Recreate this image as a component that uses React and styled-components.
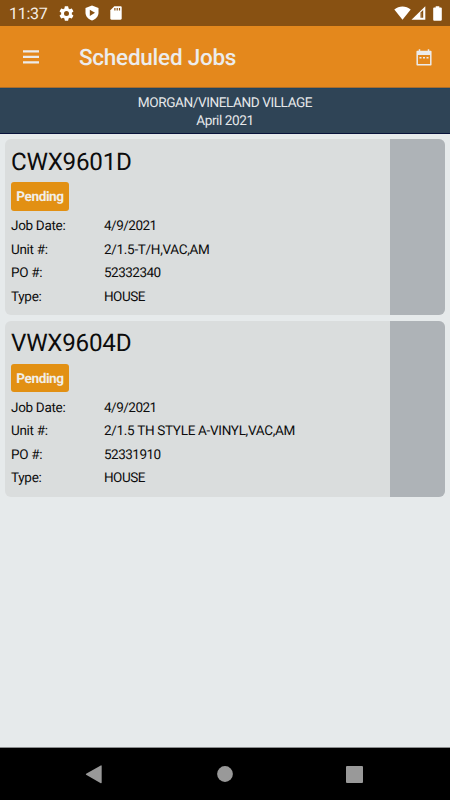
import React from "react";
import styled, { createGlobalStyle } from "styled-components";

const GlobalStyle = createGlobalStyle`
  * { box-sizing: border-box; }
  html, body { margin: 0; padding: 0; }
  body {
    font-family: Roboto, "Liberation Sans", sans-serif;
    text-rendering: geometricPrecision;
    background: #e6eaeb;
    overflow: hidden;
  }
  svg { display: block; flex: none; }
`;

const Screen = styled.div`
  width: 450px;
  height: 800px;
  display: flex;
  flex-direction: column;
  background: #e6eaeb;
  color: #0c0c0c;
`;

const StatusBar = styled.header`
  height: 26px;
  flex: none;
  display: flex;
  justify-content: space-between;
  padding: 0 8px 0 9px;
  background: #885112;
  color: #fff;
`;

const StatusGroup = styled.div`
  display: flex;
  align-items: center;
  gap: ${(p) => p.$gap}px;
`;

const Clock = styled.time`
  width: 39px;
  font-size: 16px;
  letter-spacing: -0.3px;
  line-height: 26px;
  padding-top: 2px;
  color: #f6eee6;
  white-space: nowrap;
`;

const AppBar = styled.div`
  height: 62px;
  flex: none;
  display: flex;
  align-items: center;
  padding: 1px 18px 0 22px;
  background: #e4881c;
  color: #ececec;
  border-bottom: 1px solid #a96c2c;
`;

const Title = styled.h1`
  flex: 1;
  margin: 2px 0 0 39px;
  font-size: 22.5px;
  font-weight: 500;
  line-height: 30px;
  letter-spacing: -0.25px;
`;

const IconButton = styled.button`
  display: flex;
  padding: 0;
  border: 0;
  background: none;
  color: inherit;
`;

const Location = styled.div`
  height: 46px;
  flex: none;
  padding-top: 5px;
  background: #2f4456;
  border-top: 1px solid #1f4562;
  border-bottom: 1px solid #07123a;
  color: #e6e8ea;
  text-align: center;
  font-size: 13.6px;
  letter-spacing: -0.42px;
  line-height: 18px;
`;

const Jobs = styled.main`
  flex: 1;
  display: flex;
  flex-direction: column;
  gap: 5.4px;
  padding: 5.4px 5.4px 0;
`;

const Card = styled.article`
  height: 176px;
  display: flex;
  border-radius: 6px;
  overflow: hidden;
  background: #dadddd;
`;

const CardBody = styled.div`
  flex: 1;
  padding: 8.6px 0 0 5.6px;
`;

const CardAction = styled.div`
  width: 54.6px;
  background: #aeb3b7;
`;

const JobNumber = styled.h2`
  margin: 0 0 5.5px;
  font-size: 24.2px;
  font-weight: 400;
  line-height: 29px;
  letter-spacing: -0.25px;
`;

const Badge = styled.span`
  display: block;
  width: 58px;
  height: 28.5px;
  border-radius: 3px;
  background: #e29013;
  color: #f1eee8;
  font-size: 13.6px;
  font-weight: 700;
  line-height: 30px;
  letter-spacing: -0.4px;
  text-align: center;
`;

const Details = styled.dl`
  display: grid;
  grid-template-columns: 93px 1fr;
  grid-auto-rows: 23.4px;
  margin: 4.4px 0 0;
  font-size: 13.5px;
  letter-spacing: -0.3px;
  line-height: 23.4px;
`;

const Term = styled.dt``;
const Value = styled.dd`
  margin: 0;
  white-space: nowrap;
  letter-spacing: ${(p) => (p.$numeric ? "-0.5px" : "-0.3px")};
`;

const NavBar = styled.nav`
  height: 53px;
  flex: none;
  display: flex;
  justify-content: space-between;
  align-items: center;
  padding: 0 87px 0 85px;
  border-top: 1px solid #8b8d8e;
  background: #000;
  color: #999;
`;

const SettingsIcon = () => (
  <svg width="15" height="15" viewBox="1.500 1.500 21 21" fill="currentColor">
    <path d="M19.43 12.98c.04-.32.07-.64.07-.98s-.03-.66-.07-.98l2.11-1.65c.19-.15.24-.42.12-.64l-2-3.46c-.12-.22-.39-.3-.61-.22l-2.49 1c-.52-.4-1.08-.73-1.69-.98l-.38-2.65A.49.49 0 0 0 14 2h-4c-.25 0-.46.18-.49.42l-.38 2.65c-.61.25-1.17.59-1.69.98l-2.49-1c-.23-.09-.49 0-.61.22l-2 3.46c-.13.22-.07.49.12.64l2.11 1.65c-.04.32-.07.65-.07.98s.03.66.07.98l-2.11 1.65c-.19.15-.24.42-.12.64l2 3.46c.12.22.39.3.61.22l2.49-1c.52.4 1.08.73 1.69.98l.38 2.65c.03.24.24.42.49.42h4c.25 0 .46-.18.49-.42l.38-2.65c.61-.25 1.17-.59 1.69-.98l2.49 1c.23.09.49 0 .61-.22l2-3.46c.12-.22.07-.49-.12-.64l-2.11-1.65ZM12 15.5A3.5 3.5 0 1 1 12 8.500a3.5 3.5 0 0 1 0 7Z" />
  </svg>
);

const ShieldIcon = () => (
  <svg width="14" height="16" viewBox="0 0 14 16">
    <path d="M7 .5 13.5 3v4.7c0 3.6-2.8 6.6-6.5 7.8C3.300 14.300.5 11.300.5 7.700V3Z" fill="currentColor" />
    <path d="m4.800 4.700 5.200 3.100-5.200 3.200Z" fill="#885112" />
  </svg>
);

const SdCardIcon = () => (
  <svg width="12" height="14" viewBox="0 0 12 14">
    <path d="M4.300.2h6.200c.7 0 1.200.5 1.200 1.200v11.200c0 .7-.5 1.200-1.200 1.200h-9C.8 13.800.3 13.300.3 12.600V4.200Z" fill="currentColor" />
    <path d="M4.300 2h1.200v2.600H4.300ZM6.600 2h1.200v2.600H6.600ZM8.900 2h1.200v2.600H8.900Z" fill="#885112" />
  </svg>
);

const WifiIcon = () => (
  <svg width="17" height="14" viewBox="0 0 17 14" fill="currentColor">
    <path d="M.3 3.500C5-.4 12-.4 16.700 3.500L8.500 13.700Z" />
  </svg>
);

const SignalIcon = () => (
  <svg width="15" height="14" viewBox="0 0 15 14">
    <path d="M.5 13.700 14.300.2v13.500Z" fill="currentColor" />
    <path d="M9.500 6.500 12.200 3.900v7.800H9.500Z" fill="#885112" />
    <path d="M10.300 6.800h.8v4.900h-.8Z" fill="#fff" opacity=".25" />
  </svg>
);

const BatteryIcon = () => (
  <svg width="9" height="15" viewBox="0 0 9 15" fill="currentColor">
    <path d="M2.700.3h3.600v1.200h1.600c.5 0 .9.4.9.8v11.500c0 .5-.4.900-.9.900H1.100c-.5 0-.9-.4-.9-.9V2.300c0-.4.4-.8.9-.8h1.600Z" />
  </svg>
);

const MenuIcon = () => (
  <svg width="18" height="14" viewBox="0 0 18 14" fill="currentColor">
    <path d="M1 .3h16v2.300H1ZM1 5.800h16v2.300H1ZM1 11.300h16v2.300H1Z" />
  </svg>
);

const CalendarIcon = () => (
  <svg width="16" height="17" viewBox="0 0 16 17" fill="none" stroke="currentColor">
    <path d="M1.200 2.500h13.600v13.200H1.200Z" strokeWidth="1.500" strokeLinejoin="round" />
    <path d="M1 2h14v4H1Z" fill="currentColor" stroke="none" />
    <path d="M3.500.3V3M12.500.3V3" strokeWidth="1.500" />
    <path d="M3.500 8.800h2M7 8.800h2M10.500 8.800h2" strokeWidth="1.500" />
  </svg>
);

const BackIcon = () => (
  <svg width="18" height="19" viewBox="0 0 18 19" fill="currentColor">
    <path d="M1.100 8.800 15.800.4c.4-.2.9 0 .9.600v16.600c0 .5-.5.8-.9.600L1.100 9.800c-.4-.3-.4-.7 0-1Z" />
  </svg>
);

const HomeIcon = () => (
  <svg width="16" height="16" viewBox="0 0 16 16"><circle cx="8" cy="8" r="7.900" fill="currentColor" /></svg>
);

const RecentsIcon = () => (
  <svg width="17" height="17" viewBox="0 0 17 17"><rect width="17" height="17" rx="1" fill="currentColor" /></svg>
);

const jobs = [
  { number: "CWX9601D", date: "4/9/2021", unit: "2/1.5-T/H,VAC,AM", po: "52332340", type: "HOUSE" },
  { number: "VWX9604D", date: "4/9/2021", unit: "2/1.5 TH STYLE A-VINYL,VAC,AM", po: "52331910", type: "HOUSE" },
];

function JobCard({ job }) {
  return (
    <Card>
      <CardBody>
        <JobNumber>{job.number}</JobNumber>
        <Badge>Pending</Badge>
        <Details>
          <Term>Job Date:</Term><Value $numeric>{job.date}</Value>
          <Term>Unit #:</Term><Value>{job.unit}</Value>
          <Term>PO #:</Term><Value $numeric>{job.po}</Value>
          <Term>Type:</Term><Value $numeric>{job.type}</Value>
        </Details>
      </CardBody>
      <CardAction />
    </Card>
  );
}

export default function App() {
  return (
    <Screen>
      <GlobalStyle />
      <StatusBar>
        <StatusGroup $gap={11}>
          <Clock>11:37</Clock>
          <SettingsIcon />
          <ShieldIcon />
          <SdCardIcon />
        </StatusGroup>
        <StatusGroup $gap={7}>
          <StatusGroup $gap={0}>
            <WifiIcon />
            <SignalIcon />
          </StatusGroup>
          <BatteryIcon />
        </StatusGroup>
      </StatusBar>
      <AppBar>
        <IconButton aria-label="Menu"><MenuIcon /></IconButton>
        <Title>Scheduled Jobs</Title>
        <IconButton aria-label="Calendar"><CalendarIcon /></IconButton>
      </AppBar>
      <Location>
        <div>MORGAN/VINELAND VILLAGE</div>
        <div>April 2021</div>
      </Location>
      <Jobs>
        {jobs.map((job) => <JobCard key={job.number} job={job} />)}
      </Jobs>
      <NavBar>
        <BackIcon />
        <HomeIcon />
        <RecentsIcon />
      </NavBar>
    </Screen>
  );
}
